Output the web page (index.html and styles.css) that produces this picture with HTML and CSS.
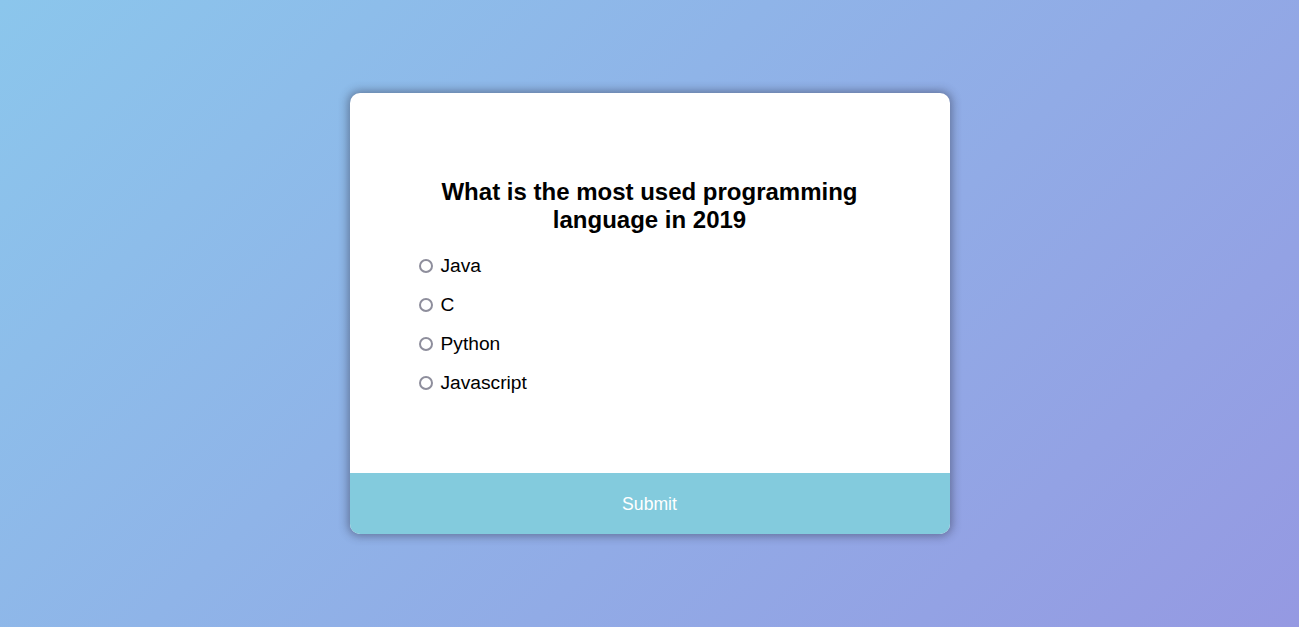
FILE: index.html
```html
<!DOCTYPE html>
<html lang="en">
<head>
<meta charset="UTF-8">
<title>Quiz</title>
<link rel="stylesheet" href="styles.css">
</head>
<body>
<div class="quiz-container">
  <div class="quiz-header">
    <h2 class="question">What is the most used programming language in 2019</h2>
    <ul class="answers">
      <li><input type="radio" name="answer" id="a"><label for="a">Java</label></li>
      <li><input type="radio" name="answer" id="b"><label for="b">C</label></li>
      <li><input type="radio" name="answer" id="c"><label for="c">Python</label></li>
      <li><input type="radio" name="answer" id="d"><label for="d">Javascript</label></li>
    </ul>
  </div>
  <button class="submit">Submit</button>
</div>
</body>
</html>
```
FILE: styles.css
```css
* { box-sizing: border-box; }
html, body { height: 100%; }
body {
  margin: 0;
  font-family: "Liberation Sans", Arial, sans-serif;
  background-image: linear-gradient(135deg, #8bc6ec 0%, #9599e2 100%);
  display: flex;
  align-items: center;
  justify-content: center;
}
.quiz-container {
  background-color: #fff;
  border-radius: 10px;
  box-shadow: 0 0 10px 2px rgba(40, 40, 60, 0.45);
  width: 600px;
  overflow: hidden;
}
.quiz-header { padding: 85px 64px 79px; }
.question {
  margin: 0;
  padding: 0 16px;
  text-align: center;
  font-size: 24px;
  line-height: 28px;
}
.answers {
  list-style-type: none;
  padding: 0;
  margin: 20px 0 0;
}
.answers li {
  display: flex;
  align-items: center;
  font-size: 19.2px;
  line-height: 23px;
  margin: 16px 0 0;
}
.answers li:first-child { margin-top: 0; }
.answers input {
  appearance: none;
  -webkit-appearance: none;
  width: 14px;
  height: 14px;
  margin: 1px 0 0 5px;
  border: 2px solid #8e8e9c;
  border-radius: 50%;
  background: #fff;
  flex: none;
}
.answers label {
  cursor: pointer;
  margin-left: 8px;
}
.submit {
  background-color: #83cbdd;
  color: #fff;
  border: none;
  display: block;
  width: 100%;
  cursor: pointer;
  font-size: 17.6px;
  line-height: 20px;
  font-family: inherit;
  padding: 20.5px;
}
```
